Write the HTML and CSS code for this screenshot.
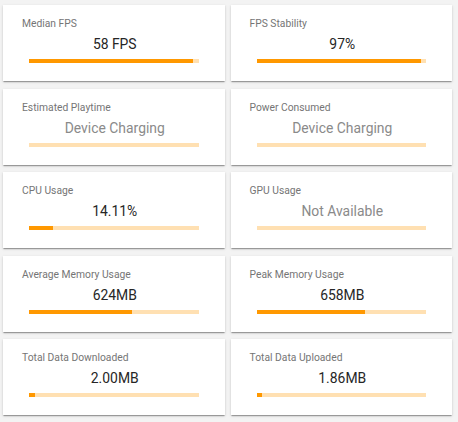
FILE: index.html
```html
<!DOCTYPE html>
<html lang="en">
  <head>
    <meta charset="UTF-8" />
    <meta name="viewport" content="width=device-width, initial-scale=1.0" />
    <title>Session Summary</title>
    <link rel="stylesheet" href="styles.css">
  </head>
  <body>
    <div class="stats">
      <div class="card">
        <div class="label">Median FPS</div>
        <div class="value">58 FPS</div>
        <div class="bar"><div class="fill" style="width: 96.7%"></div></div>
      </div>
      <div class="card">
        <div class="label">FPS Stability</div>
        <div class="value">97%</div>
        <div class="bar"><div class="fill" style="width: 97%"></div></div>
      </div>

      <div class="card">
        <div class="label">Estimated Playtime</div>
        <div class="value muted">Device Charging</div>
        <div class="bar"><div class="fill" style="width: 0%"></div></div>
      </div>
      <div class="card">
        <div class="label">Power Consumed</div>
        <div class="value muted">Device Charging</div>
        <div class="bar"><div class="fill" style="width: 0%"></div></div>
      </div>

      <div class="card">
        <div class="label">CPU Usage</div>
        <div class="value">14.11%</div>
        <div class="bar"><div class="fill" style="width: 14.11%"></div></div>
      </div>
      <div class="card">
        <div class="label">GPU Usage</div>
        <div class="value muted">Not Available</div>
        <div class="bar"><div class="fill" style="width: 0%"></div></div>
      </div>

      <div class="card">
        <div class="label">Average Memory Usage</div>
        <div class="value">624MB</div>
        <div class="bar"><div class="fill" style="width: 60.9%"></div></div>
      </div>
      <div class="card">
        <div class="label">Peak Memory Usage</div>
        <div class="value">658MB</div>
        <div class="bar"><div class="fill" style="width: 64.3%"></div></div>
      </div>

      <div class="card">
        <div class="label">Total Data Downloaded</div>
        <div class="value">2.00MB</div>
        <div class="bar"><div class="fill" style="width: 3.6%"></div></div>
      </div>
      <div class="card">
        <div class="label">Total Data Uploaded</div>
        <div class="value">1.86MB</div>
        <div class="bar"><div class="fill" style="width: 3.4%"></div></div>
      </div>
    </div>
  </body>
</html>
```

FILE: styles.css
```css
body {
  margin: 0;
  background: #f3f3f3;
  font-family: Roboto, "Noto Sans", sans-serif;
  overflow: hidden;
}

.stats {
  display: grid;
  grid-template-columns: 1fr 1fr;
  column-gap: 6px;
  row-gap: 7.5px;
  padding: 5px 6px 5px 3px;
}

.card {
  background: white;
  padding: 13px 0 17px;
  box-shadow: 0 2px 1px -1px rgba(0, 0, 0, 0.2), 0 1px 1px 0 rgba(0, 0, 0, 0.14),
    0 1px 3px 0 rgba(0, 0, 0, 0.12);
  display: flex;
  flex-direction: column;
}

.label {
  font-size: 10.3px;
  line-height: 12px;
  color: #757575;
  padding-left: 19px;
}

.value {
  margin-top: 6px;
  font-size: 13.9px;
  line-height: 16px;
  color: #262626;
  text-align: center;
  padding-left: 2px;
}

.value.muted {
  color: #8a8a8a;
}

/* progress track + fill */
.bar {
  margin: 7px 26px 1px;
  height: 4px;
  background: #ffe0b2;
}

.fill {
  height: 100%;
  background: #ff9800;
}
```
